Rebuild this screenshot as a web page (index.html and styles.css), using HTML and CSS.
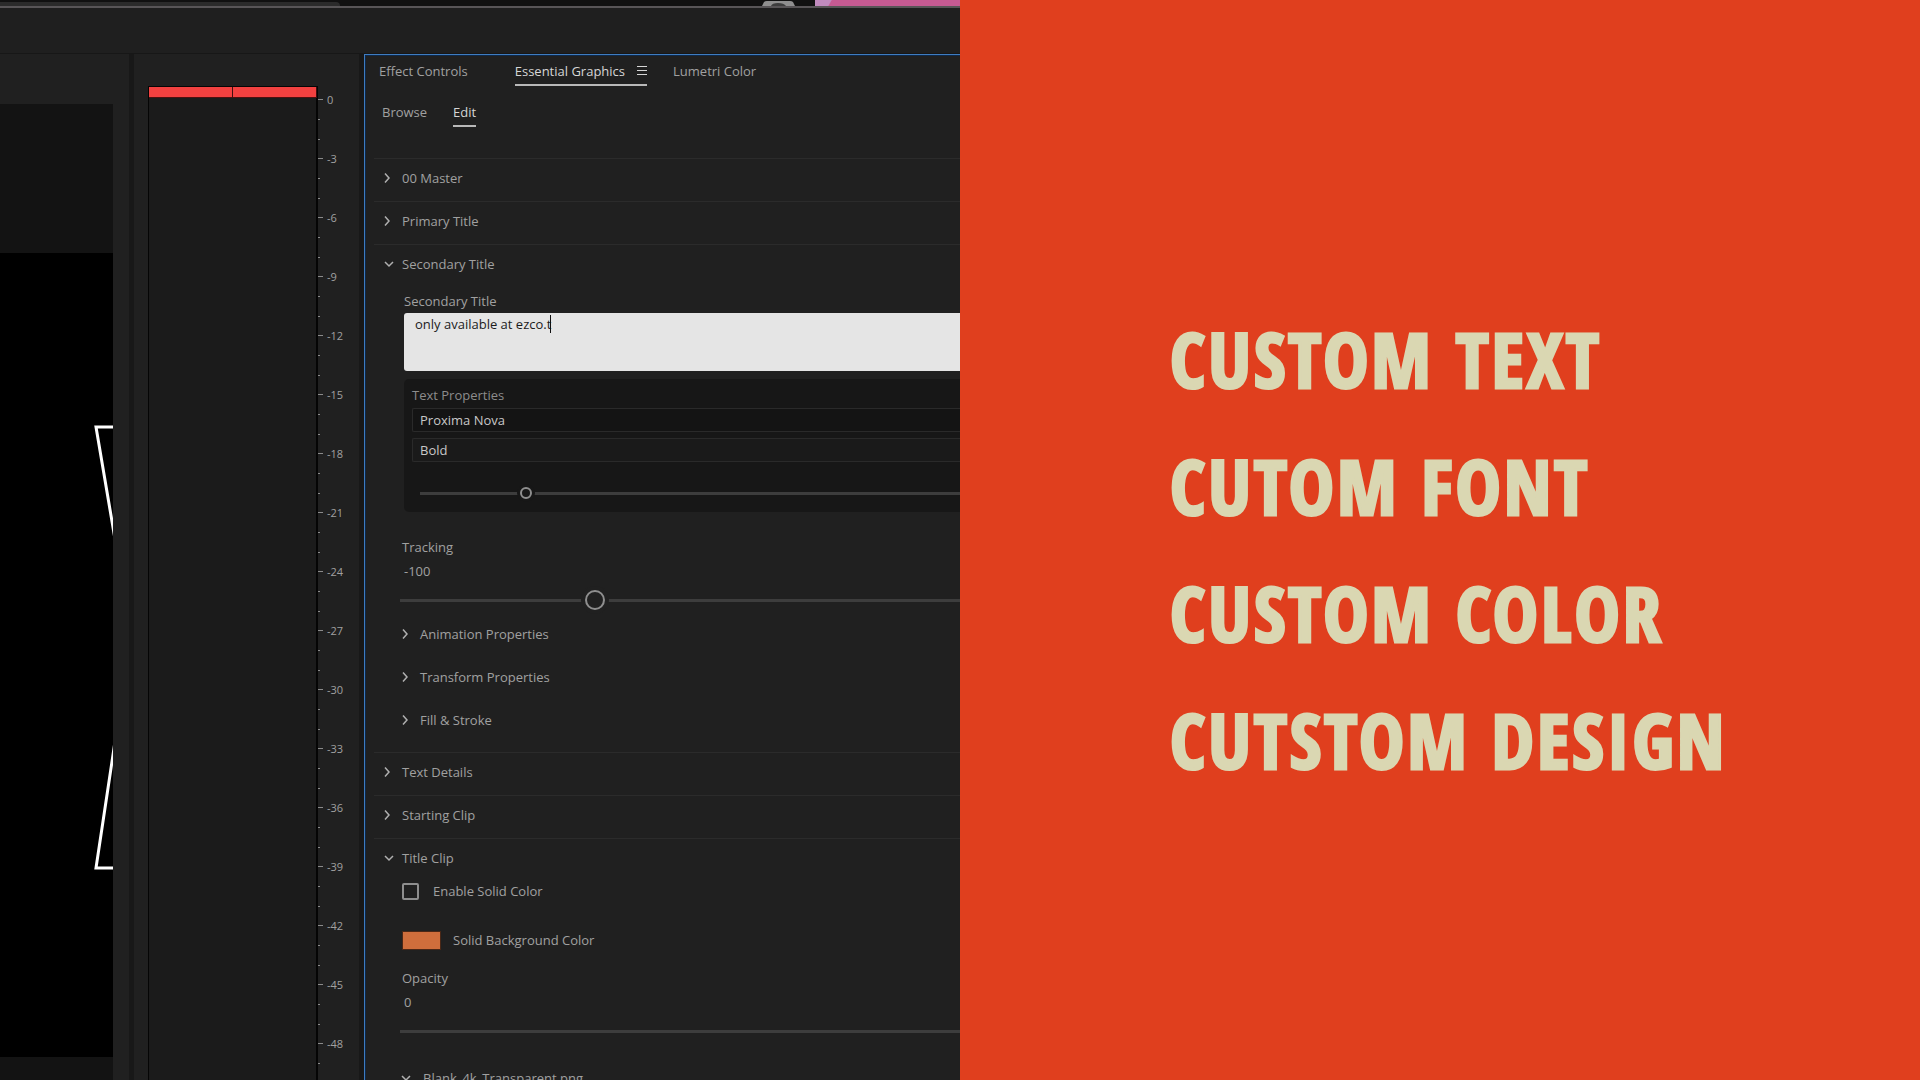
FILE: index.html
```html
<!DOCTYPE html>
<html lang="en">
<head>
<meta charset="utf-8">
<title>Essential Graphics</title>
<link rel="stylesheet" href="styles.css">
</head>
<body>
<div class="split">
  <main class="editor">
    <div class="browser-strip">
      <div class="browser-tab"></div>
      <svg class="strip-icon" width="33" height="6" viewBox="0 0 33 6" aria-hidden="true">
        <path d="M0 6 L2 2 Q3 1 5 1 H28 Q30 1 31 2 L33 6 Z" fill="#8f8f8f"/>
        <path d="M9 6 Q10 3 16 3 Q22 3 24 6 Z" fill="#3d3d3d"/>
      </svg>
      <div class="strip-art"></div>
    </div>
    <header class="workspace-bar"></header>
    <div class="panels">
      <section class="monitor" aria-label="Program monitor">
        <div class="stage">
          <svg class="frame" width="113" height="804" viewBox="0 0 113 804" preserveAspectRatio="none" aria-hidden="true">
            <path d="M130 174 H96 L116 292" fill="none" stroke="#fff" stroke-width="3"/>
            <path d="M116 482 L96 615 H130" fill="none" stroke="#fff" stroke-width="3"/>
          </svg>
        </div>
      </section>
      <section class="meter" aria-label="Audio meters">
        <div class="meter-body">
          <div class="clip"></div>
          <div class="clip"></div>
        </div>
        <ol class="scale">
          <li>0</li><li>-3</li><li>-6</li><li>-9</li><li>-12</li><li>-15</li><li>-18</li><li>-21</li><li>-24</li>
          <li>-27</li><li>-30</li><li>-33</li><li>-36</li><li>-39</li><li>-42</li><li>-45</li><li>-48</li>
        </ol>
      </section>
      <section class="graphics" aria-label="Essential Graphics">
        <nav class="tabs">
          <button class="tab" type="button">Effect Controls</button>
          <button class="tab tab-active" type="button">Essential Graphics
            <svg width="10" height="9" viewBox="0 0 10 9" aria-hidden="true"><path d="M0 .5H10M0 4.5H10M0 8.5H10" stroke="currentColor"/></svg>
          </button>
          <button class="tab" type="button">Lumetri Color</button>
        </nav>
        <nav class="modes">
          <button class="mode" type="button">Browse</button>
          <button class="mode mode-active" type="button">Edit</button>
        </nav>
        <div class="groups">
          <button class="group" type="button"><svg class="chev" viewBox="0 0 10 10"><path d="M1 .5L5 5L1 9.5"/></svg>00 Master</button>
          <button class="group" type="button"><svg class="chev" viewBox="0 0 10 10"><path d="M1 .5L5 5L1 9.5"/></svg>Primary Title</button>
          <button class="group" type="button"><svg class="chev" viewBox="0 0 10 10"><path d="M1 3L5 7L9 3"/></svg>Secondary Title</button>
          <div class="secondary">
            <label class="field-label" for="title-text">Secondary Title</label>
            <div class="text-wrap">
              <textarea id="title-text" class="title-text" spellcheck="false">only available at ezco.t</textarea>
              <span class="caret"></span>
            </div>
            <div class="text-props">
              <label class="props-label" for="font-family">Text Properties</label>
              <select id="font-family" class="pick"><option>Proxima Nova</option></select>
              <select class="pick pick-style" aria-label="Font style"><option>Bold</option></select>
              <input class="slider slider-small" type="range" min="0" max="100" value="19" aria-label="Font size">
            </div>
          </div>
          <div class="param">
            <label class="name" for="tracking">Tracking</label>
            <output class="value" for="tracking">-100</output>
            <input id="tracking" class="slider slider-large" type="range" min="-500" max="670" value="-100">
          </div>
          <div class="subgroups">
            <button class="group subgroup" type="button"><svg class="chev" viewBox="0 0 10 10"><path d="M1 .5L5 5L1 9.5"/></svg>Animation Properties</button>
            <button class="group subgroup" type="button"><svg class="chev" viewBox="0 0 10 10"><path d="M1 .5L5 5L1 9.5"/></svg>Transform Properties</button>
            <button class="group subgroup" type="button"><svg class="chev" viewBox="0 0 10 10"><path d="M1 .5L5 5L1 9.5"/></svg>Fill &amp; Stroke</button>
          </div>
          <button class="group" type="button"><svg class="chev" viewBox="0 0 10 10"><path d="M1 .5L5 5L1 9.5"/></svg>Text Details</button>
          <button class="group" type="button"><svg class="chev" viewBox="0 0 10 10"><path d="M1 .5L5 5L1 9.5"/></svg>Starting Clip</button>
          <button class="group" type="button"><svg class="chev" viewBox="0 0 10 10"><path d="M1 3L5 7L9 3"/></svg>Title Clip</button>
          <div class="clip-options">
            <label class="option"><input class="tick" type="checkbox">Enable Solid Color</label>
            <label class="option option-color"><input class="swatch" type="color" value="#cf6e3c">Solid Background Color</label>
          </div>
          <div class="param param-opacity">
            <label class="name" for="opacity">Opacity</label>
            <output class="value" for="opacity">0</output>
            <input id="opacity" class="slider slider-large slider-bare" type="range" min="0" max="100" value="0">
          </div>
          <button class="group subgroup media" type="button"><svg class="chev" viewBox="0 0 10 10"><path d="M1 3L5 7L9 3"/></svg>Blank_4k_Transparent.png</button>
        </div>
      </section>
    </div>
  </main>
  <aside class="poster">
    <p>CUSTOM TEXT</p>
    <p>CUTOM FONT</p>
    <p>CUSTOM COLOR</p>
    <p>CUTSTOM DESIGN</p>
  </aside>
</div>
</body>
</html>
```

FILE: styles.css
```css
* { box-sizing: border-box; }

body {
  margin: 0;
  background: #1f1f1f;
  color: #a0a0a0;
  font: 13px/20px "Open Sans", "Noto Sans", sans-serif;
}

button, select, textarea, input { font: inherit; color: inherit; margin: 0; }
button { background: none; border: 0; padding: 0; text-align: left; }

.split {
  display: grid;
  grid-template-columns: 1fr 1fr;
  height: 100vh;
  overflow: hidden;
}

.editor { display: flex; flex-direction: column; min-width: 0; min-height: 0; }

/* Sliver of the browser window behind the editor */
.browser-strip {
  display: flex;
  align-items: flex-end;
  flex: none;
  height: 8px;
  background: #111;
  border-bottom: 2px solid #585557;
}
.browser-tab { width: 340px; height: 4px; background: #2b2b2b; border-radius: 0 4px 0 0; margin-right: auto; }
.strip-icon { margin-right: 20px; }
.strip-art { width: 145px; height: 6px; background: linear-gradient(120deg, #c08abd 14px, #c65a92 15px); }

.workspace-bar { flex: none; height: 46px; border-bottom: 1px solid #171717; }

.panels {
  display: grid;
  grid-template-columns: 129px 225px 1fr;
  gap: 5px;
  flex: 1;
  min-height: 0;
  background: #181818;
}

.monitor { display: flex; padding: 50px 16px 0 0; background: #202020; min-height: 0; }
.stage { flex: 1; display: flex; padding: 149px 0 23px; background: #131313; }
.frame { flex: 1; height: 100%; background: #000; }

.meter { display: flex; padding: 32px 0 0 14px; background: #202020; overflow: hidden; }
.meter-body {
  display: flex;
  gap: 1px;
  width: 170px;
  background: #1b1b1b;
  border: 1px solid #050505;
  border-right-width: 2px;
  border-bottom: 0;
}
.clip { flex: 1; height: 11px; background: #f24140; border-bottom: 1px solid #4d1010; box-shadow: 1px 0 #401010; }

.scale { flex: 1; list-style: none; margin: 0; padding: 4px 0 0; }
.scale li {
  height: 59px;
  padding-left: 9px;
  font-size: 11px;
  line-height: 20px;
  background:
    linear-gradient(#8a8a8a, #8a8a8a) 0 9px / 5px 1px no-repeat,
    linear-gradient(#8a8a8a, #8a8a8a) 0 29px / 2px 1px no-repeat,
    linear-gradient(#8a8a8a, #8a8a8a) 0 49px / 2px 1px no-repeat;
}

.graphics {
  display: flex;
  flex-direction: column;
  background: #202020;
  border: solid #3f7cc0;
  border-width: 1px 0 0 1px;
  box-shadow: inset 1px 1px #0e2848;
  overflow: hidden;
}

.tabs { display: flex; flex: none; padding: 6px 0 0 14px; }
.tab { display: flex; align-items: center; height: 25px; padding-bottom: 4px; white-space: nowrap; border-bottom: 2px solid transparent; }
.tab-active { gap: 12px; margin: 0 26px 0 47px; color: #d6d6d6; border-color: #b8b8b8; }

.modes { display: flex; flex: none; gap: 26px; padding: 16px 0 0 17px; }
.mode { height: 25px; padding-bottom: 5px; border-bottom: 2px solid transparent; }
.mode-active { color: #d6d6d6; border-color: #b8b8b8; }

.groups { display: flex; flex-direction: column; flex: none; padding: 31px 0 0 9px; }
.group {
  display: flex;
  align-items: center;
  gap: 8px;
  height: 43px;
  padding: 0 0 4px 10px;
  border-top: 1px solid #2b2b2b;
}
.chev { flex: none; width: 10px; height: 10px; fill: none; stroke: #b0b0b0; stroke-width: 1.5; }

.secondary { display: flex; flex-direction: column; padding: 4px 0 0 30px; }
.text-wrap { position: relative; display: flex; margin-top: 2px; }
.title-text {
  flex: 1;
  height: 58px;
  padding: 1px 11px;
  color: #1c1c1c;
  background: #e5e5e5;
  border: 0;
  border-radius: 3px 0 0 3px;
  resize: none;
  outline: 0;
}
.caret { position: absolute; left: 146px; top: 2px; width: 1px; height: 18px; background: #111; }

.text-props {
  display: flex;
  flex-direction: column;
  margin-top: 8px;
  padding: 6px 0 9px 8px;
  background: #171717;
  border-radius: 5px 0 0 5px;
}
.props-label { color: #8c8c8c; }
.pick {
  appearance: none;
  height: 24px;
  margin: 3px 0;
  padding: 0 7px;
  color: #c8c8c8;
  background: #141414;
  border: solid #2a2a2a;
  border-width: 1px 0 1px 1px;
  border-radius: 2px 0 0 2px;
}
.pick-style { background: #1a1a1a; }

.slider { appearance: none; background: none; height: 20px; }
.slider::-webkit-slider-runnable-track { height: 3px; background: #3d3d3d; }
.slider::-webkit-slider-thumb { appearance: none; border-radius: 50%; border: 2px solid #8e8e8e; }
.slider-small { margin: 18px 0 0 8px; }
.slider-small::-webkit-slider-thumb { width: 12px; height: 12px; margin-top: -5px; background: #171717; box-shadow: 0 0 0 3px #171717; }
.slider-large::-webkit-slider-thumb { width: 20px; height: 20px; margin-top: -9px; background: #202020; box-shadow: 0 0 0 4px #202020; }
.slider-bare::-webkit-slider-thumb { visibility: hidden; }

.param { display: flex; flex-direction: column; padding: 25px 0 0 26px; }
.param-opacity { padding-top: 18px; }
.name { padding-left: 2px; }
.value { margin-top: 4px; padding-left: 4px; }
.param .slider { margin: 9px 0 0; }

.subgroups { display: flex; flex-direction: column; padding: 4px 0 9px 18px; }
.subgroup { border-top-color: transparent; }

.clip-options { display: flex; flex-direction: column; padding: 0 0 0 28px; gap: 29px; }
.option { display: flex; align-items: center; gap: 14px; }
.option-color { gap: 12px; }
.tick { appearance: none; width: 17px; height: 17px; border: 2px solid #8e8e8e; border-radius: 2px; }
.swatch { appearance: none; width: 39px; height: 19px; padding: 0; border: 1px solid #4a2716; background: #cf6e3c; }
.swatch::-webkit-color-swatch-wrapper { padding: 0; }
.swatch::-webkit-color-swatch { border: 0; }

.media { gap: 12px; margin: 17px 0 0 17px; }

.poster {
  display: flex;
  flex-direction: column;
  justify-content: center;
  padding: 18px 0 0 210px;
  background: #e03f1e;
  color: #dad7b2;
  font: 800 76px/127px "Open Sans Condensed", "Roboto Condensed", "Liberation Sans", sans-serif;
  letter-spacing: 3px;
  -webkit-text-stroke: 3px #dad7b2;
  white-space: nowrap;
}
.poster p { margin: 0; }
```
